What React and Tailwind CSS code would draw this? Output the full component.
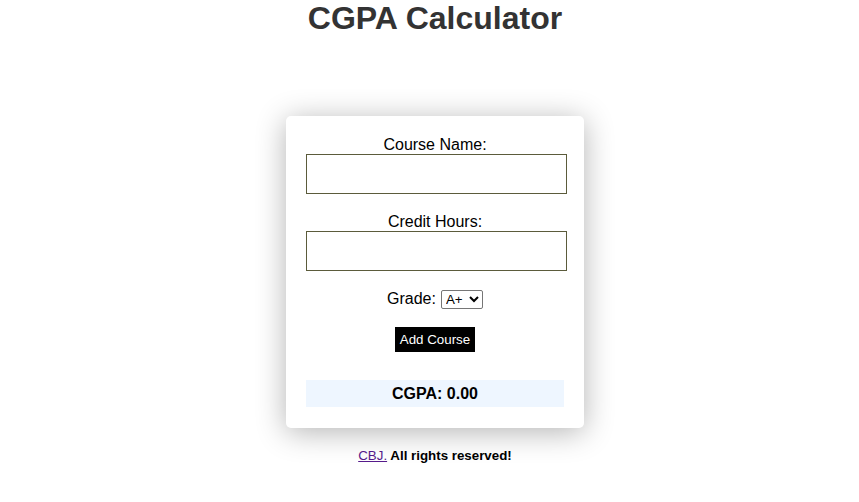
import { useState } from 'react'

const grades = ['A+', 'A', 'A-', 'B+', 'B', 'B-', 'C+', 'C', 'C-', 'D', 'F']

export default function App() {
  const [grade, setGrade] = useState('A+')

  return (
    <div className="min-h-screen bg-white pl-[11px] text-center font-['Liberation_Sans',Arial,sans-serif] text-black">
      <h1 className="text-[32px] font-bold leading-[37px] text-[#333]">CGPA Calculator</h1>

      {/* Calculator card */}
      <div className="mx-auto mt-[79px] w-[298px] rounded-[5px] bg-white px-5 pt-5 pb-[21px] shadow-[0_4px_30px_rgba(0,0,0,0.3)]">
        <label className="block text-[16px] leading-[18px]">Course Name:</label>
        <input
          type="text"
          className="block h-10 w-[261px] border border-[#5b5b3b] bg-white px-2 outline-none"
        />

        <label className="mt-[19px] block text-[16px] leading-[18px]">Credit Hours:</label>
        <input
          type="text"
          className="block h-10 w-[261px] border border-[#5b5b3b] bg-white px-2 outline-none"
        />

        <div className="mt-[18px] flex items-center justify-center gap-[5px] text-[16px] leading-[20px]">
          <span>Grade:</span>
          <select
            value={grade}
            onChange={(e) => setGrade(e.target.value)}
            className="h-[19px] w-[42px] rounded-[2px] border border-[#767676] bg-white text-[13.33px] leading-[15px]"
          >
            {grades.map((g) => (
              <option key={g}>{g}</option>
            ))}
          </select>
        </div>

        <button className="mx-auto mt-[18px] block h-[25px] w-[80px] bg-black text-[13.33px] text-white">
          Add Course
        </button>

        <div className="mt-7 flex h-[27px] w-[258px] items-center justify-center bg-[#eef6ff] text-[16px] font-bold">
          CGPA: 0.00
        </div>
      </div>

      <p className="mt-[18px] text-[13.33px] font-bold">
        <a href="#" className="font-normal text-[#551a8b] underline">CBJ.</a> All rights reserved!
      </p>
    </div>
  )
}
